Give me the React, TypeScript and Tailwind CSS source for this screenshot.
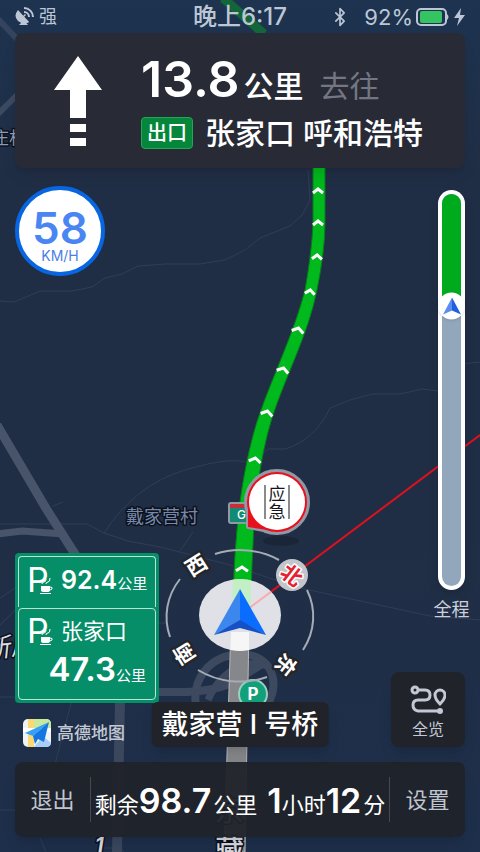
import React from "react";
import { Bluetooth } from "lucide-react";

const fontStack = "font-['Inter','Noto_Sans_CJK_SC',sans-serif]";

const chevrons = [
  { x: 318, y: 191, w: 5, a: 0 },
  { x: 318, y: 223, w: 5, a: 0 },
  { x: 317, y: 257, w: 5, a: 3 },
  { x: 310, y: 292, w: 5, a: 8 },
  { x: 298, y: 330, w: 6, a: 14 },
  { x: 283, y: 370, w: 6, a: 16 },
  { x: 267, y: 413, w: 6, a: 14 },
  { x: 255, y: 460, w: 6, a: 10 },
  { x: 242, y: 569, w: 6, a: 2 },
];

function RoadMap() {
  return (
    <svg
      className="absolute inset-0 h-full w-full"
      viewBox="0 0 480 852"
      preserveAspectRatio="xMidYMid slice"
      aria-hidden="true"
    >
      <defs>
        <linearGradient id="ground" x1="0" y1="0" x2="0" y2="1">
          <stop offset="0" stopColor="#1d3350" />
          <stop offset="0.2" stopColor="#202e45" />
          <stop offset="0.62" stopColor="#202e45" />
          <stop offset="1" stopColor="#1e2f4b" />
        </linearGradient>
        <clipPath id="puck">
          <ellipse cx="240" cy="615" rx="41" ry="36" />
        </clipPath>
      </defs>
      <rect width="480" height="852" fill="url(#ground)" />

      <g fill="none" stroke="#2f3e55" strokeWidth="1">
        <path d="M0 301 L14 302 L40 291 L72 291 L92 287 L105 278 L122 274 L138 266 L165 264 L200 264 L225 260 L245 250 L260 238 L290 226 L302 215 L310 200 L308 170" />
        <path d="M0 524 H87 L104 533 L128 541 L160 547 L230 565 L300 588 L430 616 L480 620" />
        <path d="M104 533 Q135 485 185 470 T250 464 L268 449 L285 449 Q315 440 330 408 L350 400 L372 394 L400 394 L422 389 L438 391 L462 364 L480 362" />
        <path d="M53 506 L63 502 M180 551 L193 532" />
        <path d="M0 598 L15 588 M0 625 L15 610 M0 697 H73 L66 722 L54 768 M0 810 H15 M40 838 L46 852 M104 848 H120 L124 852 M130 623 H166" />
      </g>

      <g fill="none" stroke="#48546a">
        <path d="M-3 425 L47 510 L80 562" strokeWidth="9" />
        <path d="M-3 534 L22 531 L64 534" strokeWidth="7" />
        <path d="M-3 115 L18 94" strokeWidth="6" stroke="#3b4961" />
        <path d="M-4 17 L18 40" strokeWidth="6" stroke="#34445e" />
        <path d="M117 852 L120 700" strokeWidth="10" stroke="#3a475d" />
        <path d="M159 692 H188 Q225 690 243 676 L262 664" strokeWidth="8" stroke="#3d495e" />
        <path d="M196 706 C192 680 208 656 240 654 C272 654 282 684 266 706" strokeWidth="8" stroke="#3d495e" />
        <path d="M208 700 C222 668 252 656 270 668" strokeWidth="7" stroke="#3d495e" />
      </g>

      <path d="M223 -2 L264 34" stroke="#12663a" strokeWidth="9" fill="none" />

      <path d="M231 625 H249 L245 852 H224 Z" fill="#85878a" stroke="#b7b9bb" strokeWidth="1" />
      <path
        d="M313 150 L313 223 Q312 250 305 290 C295 330 272 378 260 413 C250 440 240 490 237 530 Q233 570 233 622 L251 622 Q251 580 253 545 C254 510 259 460 272 418 C286 375 308 335 317 290 Q325 250 325 223 L325 150 Z"
        fill="#00b91d"
        stroke="#077c1a"
        strokeWidth="1"
      />
      {chevrons.map((c) => (
        <path
          key={c.y}
          d={`M${-c.w} 2 L0 -2 L${c.w} 2`}
          transform={`translate(${c.x} ${c.y}) rotate(${c.a})`}
          fill="none"
          stroke="#fff"
          strokeWidth="3"
        />
      ))}
      <path d="M240 615 L480 435" stroke="#e0101c" strokeWidth="2" />

      {/* place names */}
      <g fontFamily="Inter, 'Noto Sans CJK SC', sans-serif" paintOrder="stroke" stroke="#0c111b" strokeWidth="3" strokeLinejoin="round">
        <text x="126" y="523" fontSize="18" fill="#7689ad">戴家营村</text>
        <text x="-8" y="144" fontSize="17" fill="#8b9cba">庄村</text>
        <text x="-16" y="657" fontSize="26" fill="#d9dbe0" fontStyle="italic" transform="rotate(-8 0 650)">新房</text>
        <text x="95" y="852" fontSize="20" fill="#d9dbe0" fontStyle="italic" fontWeight="700">1</text>
        <text x="215" y="821" fontSize="29" fill="#d9dbe0" fontWeight="500">京</text>
        <text x="215" y="861" fontSize="29" fill="#d9dbe0" fontWeight="500">藏</text>
      </g>

      {/* road shield */}
      <rect x="229" y="503" width="30" height="20" rx="2" fill="#138a74" stroke="#8f9aa5" strokeWidth="2" />
      <rect x="230" y="504" width="28" height="4" fill="#c62f35" />
      <text x="237" y="519" fontSize="12" fill="#fff" fontFamily="Inter, sans-serif" fontWeight="500">G</text>

      {/* emergency lane marker */}
      <ellipse cx="281" cy="541" rx="18" ry="5" fill="#18222f" opacity="0.6" />
      <g fill="#9298a6" stroke="#9298a6" strokeWidth="4" strokeLinejoin="round">
        <circle cx="277" cy="502" r="31" />
        <path d="M248 505 V527 L275 532 Z" />
      </g>
      <circle cx="277" cy="502" r="30" fill="#e8101c" />
      <path d="M248 505 V527 L275 531 Z" fill="#e8101c" />
      <circle cx="277" cy="502" r="28" fill="#fff" />
      <g fill="#15171c" fontFamily="'Noto Sans CJK SC', sans-serif" fontSize="17" textAnchor="middle">
        <text x="277" y="500">应</text>
        <text x="277" y="518">急</text>
      </g>
      <path d="M265 485 V519 M289 485 V519" stroke="#15171c" strokeWidth="1" />

      {/* service area marker */}
      <circle cx="253" cy="694" r="14" fill="#12a07a" stroke="#9ccfc0" strokeWidth="2" />
      <text x="253" y="700" fontSize="17" fontWeight="700" fill="#fff" textAnchor="middle" fontFamily="Inter, sans-serif">P</text>

      {/* compass */}
      <g fill="none" stroke="#a5abb7" strokeWidth="2">
        <path d="M215 554 A74 66 0 0 1 279 560" />
        <path d="M307 590 A74 66 0 0 1 303 650" />
        <path d="M267 677 A74 66 0 0 1 198 670" />
        <path d="M170 637 A74 66 0 0 1 180 579" />
      </g>
      <ellipse cx="240" cy="615" rx="41" ry="36" fill="#dfe1e6" />
      <g clipPath="url(#puck)">
        <path d="M233 570 H251 V622 H232 Z" fill="#c3efc4" />
        <path d="M231 632 H249 V660 H230 Z" fill="#f6f6f6" />
        <path d="M240 615 L300 570" stroke="#fbaab0" strokeWidth="2" />
      </g>
      <path d="M240 589 L214 635 L240 621 Z" fill="#3b87ee" />
      <path d="M240 589 L266 635 L240 621 Z" fill="#0b6dff" />
      <path d="M214 635 L240 620 L266 635 L240 628 Z" fill="#1550c4" />
      <circle cx="292" cy="575" r="16" fill="#c2c5cb" />
      <g fontFamily="'Noto Sans CJK SC', sans-serif" fontWeight="700" fontSize="21" textAnchor="middle" paintOrder="stroke" strokeLinejoin="round">
        <text transform="translate(292 575) rotate(38)" y="8" fill="#e32430" stroke="#fff" strokeWidth="3">北</text>
        <g fill="#fff" stroke="#24262b" strokeWidth="5">
          <text transform="translate(196 565) rotate(-32)" y="8">西</text>
          <text transform="translate(184 654) rotate(-122)" y="8">南</text>
          <text transform="translate(286 665) rotate(128)" y="8">东</text>
        </g>
      </g>
    </svg>
  );
}

function StatusBar() {
  return (
    <header className="grid h-[33px] grid-cols-[1fr_auto_1fr] items-center px-[15px] text-[#bcc6d4]">
      <div className="flex items-center gap-1">
        <svg className="h-5 w-5" viewBox="0 0 20 20" aria-hidden="true">
          <path d="M3 4 A8 8 0 0 0 14 15 L9 10 L11 8 L10 7 L8 9 Z" fill="currentColor" />
          <path d="M3 3 Q-2 9 3 14 Q8 18 14 15 Z" fill="currentColor" />
          <path d="M4 18 H13 L9 13 Z" fill="currentColor" />
          <path d="M9 5 A5 5 0 0 1 14 10 M9 1 A9 9 0 0 1 18 10" fill="none" stroke="currentColor" strokeWidth="2" />
        </svg>
        <span className="text-lg leading-none">强</span>
      </div>
      <time className="text-2xl leading-none font-medium">晚上6:17</time>
      <div className="flex items-center justify-end">
        <Bluetooth className="mr-3.5 h-5 w-5" strokeWidth={2} aria-label="蓝牙" />
        <span className="mr-0.5 text-[22px] leading-none">92%</span>
        <svg className="h-5 w-[50px]" viewBox="0 0 50 20" aria-hidden="true">
          <rect x="2" y="2" width="29" height="16" rx="4" fill="none" stroke="currentColor" strokeWidth="2" />
          <rect x="5" y="4" width="22" height="12" rx="2" fill="#34c461" />
          <path d="M32 7 Q35 10 32 13 Z" fill="currentColor" />
          <path d="M46 1 L39 11 H44 L42 19 L50 8 H45 Z" fill="currentColor" />
        </svg>
      </div>
    </header>
  );
}

function TurnPanel() {
  return (
    <section className="mx-[15px] flex h-[135px] items-center rounded-lg bg-[#282b36] text-white shadow-lg">
      <div className="flex w-[126px] shrink-0 justify-center">
        <svg className="h-[90px] w-12" viewBox="0 0 48 90" fill="#fff" role="img" aria-label="直行">
          <path d="M24 0 L48 34 H32 V62 H16 V34 H0 Z" />
          <path d="M16 68 H32 V76 H16 Z M16 82 H32 V90 H16 Z" />
        </svg>
      </div>
      <div className="flex flex-col gap-1.5 pt-1.5">
        <p className="flex items-baseline text-[30px] leading-[46px]">
          <strong className="text-[50px] font-semibold">13.8</strong>
          <span className="ml-1 font-medium">公里</span>
          <span className="ml-4 text-[#747783]">去往</span>
        </p>
        <p className="flex items-center gap-3 text-[30px] leading-9 font-medium whitespace-nowrap">
          <span className="flex h-8 w-[52px] items-center justify-center rounded-sm border border-[#25a656] bg-[#04873a] text-xl">
            出口
          </span>
          张家口 呼和浩特
        </p>
      </div>
    </section>
  );
}

function ParkingIcon() {
  return (
    <svg className="h-8 w-6 shrink-0" viewBox="0 0 24 32" fill="#fff" aria-hidden="true">
      <text x="-2" y="28" fontSize="34" fontFamily="Inter, sans-serif">P</text>
      <path d="M11 20 H24 V31 H11 Z" fill="#058e68" />
      <path d="M12 22 H21 V26 Q21 28 18 28 H15 Q12 28 12 26 Z M11 29 H22 V30 H11 Z" />
      <path d="M21 23 Q24 23 23 25 L21 26 M13 20 Q13 18 15 18 T17 15 M17 20 Q17 18 19 18 T21 14" fill="none" stroke="#fff" strokeWidth="1" />
    </svg>
  );
}

function ServiceSign() {
  return (
    <section className="w-36 rounded bg-[#058e68] p-[3px] text-white">
      <div className="flex h-[51px] items-center rounded-t-sm border border-b-0 border-[#b9e5d5] pb-1 pl-2.5">
        <ParkingIcon />
        <p className="ml-2 flex items-baseline leading-none">
          <strong className="text-[25px] font-semibold">92.4</strong>
          <span className="text-[15px]">公里</span>
        </p>
      </div>
      <div className="mt-px h-[92px] rounded-sm border border-[#b9e5d5] pt-1.5 pr-[9px] pl-2.5">
        <div className="flex h-8 items-center">
          <ParkingIcon />
          <span className="ml-2 text-[22px] leading-none">张家口</span>
        </div>
        <p className="mt-1 flex items-baseline justify-end leading-9">
          <strong className="text-[33px] font-semibold">47.3</strong>
          <span className="text-[15px]">公里</span>
        </p>
      </div>
    </section>
  );
}

function MapLogo() {
  return (
    <div className="mt-4 ml-2 flex h-7 items-center gap-1.5 text-[#c3c9d3]">
      <svg className="h-7 w-7" viewBox="0 0 28 28" aria-hidden="true">
        <rect width="28" height="28" rx="5" fill="#eef3f5" />
        <path d="M5 0 H11 V28 H5 Z" fill="#fbd873" />
        <path d="M11 0 H23 Q28 0 28 5 V9 L11 16 Z" fill="#c8e89b" />
        <path d="M0 9 H28 V13 H0 Z" fill="#fff" />
        <path d="M11 28 L20 17 L28 24 Q28 28 23 28 Z" fill="#a9cdf9" />
        <path d="M26 3 L2 14 L10 17 Z" fill="#35a0f7" />
        <path d="M26 3 L10 17 L12 25 L15 20 L21 23 Z" fill="#1476e0" />
      </svg>
      <span className="text-[17px] leading-none font-medium">高德地图</span>
    </div>
  );
}

function RouteProgress() {
  return (
    <div className="flex w-[27px] flex-1 flex-col items-center">
      <div
        className="relative w-full flex-1 rounded-full bg-white p-1 shadow-lg"
        role="progressbar"
        aria-label="全程"
        aria-valuenow={29}
      >
        <div className="flex h-full flex-col overflow-hidden rounded-full bg-[#92a6bc]">
          <div className="h-[29%] bg-[#00aa1d]" />
        </div>
        <div className="absolute top-[29%] left-0 flex h-[27px] w-[27px] -translate-y-1/2 items-center justify-center rounded-full bg-white shadow">
          <svg className="h-[18px] w-[18px]" viewBox="0 0 18 18" aria-hidden="true">
            <path d="M9 0 L0 17 L9 13 Z" fill="#5b8df0" />
            <path d="M9 0 L18 17 L9 13 Z" fill="#1f5fe0" />
          </svg>
        </div>
      </div>
      <span className="mt-2 text-lg leading-6 whitespace-nowrap text-[#ccd1d9]">全程</span>
    </div>
  );
}

function MapControls() {
  return (
    <div className="relative flex flex-1 justify-between px-[15px]">
      <div className="flex flex-col justify-between">
        <div className="mt-[18px] flex h-[90px] w-[90px] flex-col items-center justify-center rounded-full border-4 border-[#0866e3] bg-white pt-2.5 text-[#4a86f2]">
          <strong className="text-[44px] leading-10 font-semibold">58</strong>
          <span className="text-sm leading-4 text-[#4a7fe5]">KM/H</span>
        </div>
        <div>
          <ServiceSign />
          <MapLogo />
        </div>
      </div>
      <p className="absolute bottom-0 left-1/2 flex h-[45px] -translate-x-1/2 items-center rounded-md bg-[#202329] px-2.5 text-[27px] leading-none font-medium whitespace-nowrap text-white shadow-lg">
        戴家营 Ⅰ 号桥
      </p>
      <div className="flex flex-col items-end pt-[22px]">
        <RouteProgress />
        <button
          type="button"
          className="mt-[50px] flex h-[75px] w-[74px] flex-col items-center justify-center gap-1 rounded-lg bg-[#202329] pt-1 text-[#c3c9d4] shadow-lg"
        >
          <svg className="h-[30px] w-9" viewBox="0 0 36 30" fill="none" stroke="currentColor" strokeWidth="3" aria-hidden="true">
            <circle cx="5" cy="5" r="3" />
            <path d="M8 5 H15 Q20 5 20 10 T15 15 H8 Q3 15 3 20 T8 26 H28" />
            <circle cx="30" cy="26" r="3" fill="currentColor" stroke="none" />
            <path d="M30 19 Q25 14 25 10 A5 5 0 0 1 35 10 Q35 14 30 19 Z" />
          </svg>
          <span className="text-base leading-5">全览</span>
        </button>
      </div>
    </div>
  );
}

function TripBar() {
  return (
    <footer className="m-[15px] flex h-[75px] items-center rounded-lg bg-[#202329]/95 text-white shadow-lg">
      <button type="button" className="w-[75px] shrink-0 pt-0.5 text-[22px] text-[#bfc5d0]">退出</button>
      <p className="flex h-[45px] flex-1 items-center justify-center border-x border-[#454950] whitespace-nowrap">
        <span className="flex items-baseline pt-0.5 text-[22px] leading-none">
          剩余
          <strong className="text-[34px] font-semibold">98.7</strong>
          <span className="ml-0.5">公里</span>
          <strong className="ml-2.5 text-[34px] font-semibold">1</strong>
          小时
          <strong className="text-[34px] font-semibold">12</strong>
          <span className="ml-0.5">分</span>
        </span>
      </p>
      <button type="button" className="w-[75px] shrink-0 pt-0.5 text-[22px] text-[#bfc5d0]">设置</button>
    </footer>
  );
}

export default function App() {
  return (
    <main className={`relative flex min-h-screen flex-col overflow-hidden bg-[#202e45] ${fontStack}`}>
      <RoadMap />
      <div className="relative flex flex-1 flex-col">
        <StatusBar />
        <TurnPanel />
        <MapControls />
        <TripBar />
      </div>
    </main>
  );
}
